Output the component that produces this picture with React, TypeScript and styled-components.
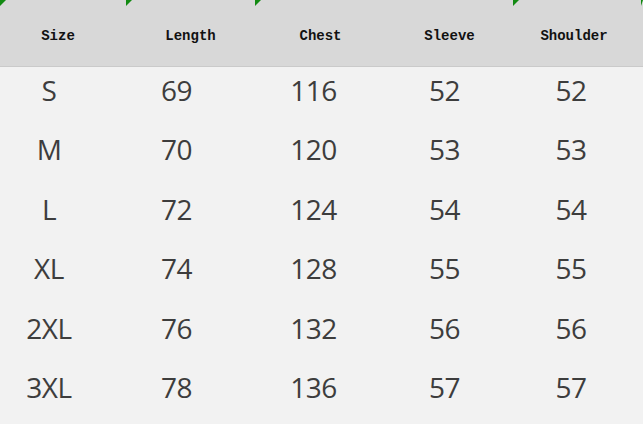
import React from 'react';
import styled, {createGlobalStyle} from 'styled-components';

const GlobalStyle = createGlobalStyle`
  html, body {
    margin: 0;
    padding: 0;
    background: #f2f2f2;
  }
`;

type Col = {
  title: string;
  width: number;
  headShift: number;
  bodyShift: number;
  mark: boolean;
};

const columns: Col[] = [
  {title: 'Size', width: 126, headShift: -5, bodyShift: -14, mark: true},
  {title: 'Length', width: 129, headShift: 0, bodyShift: -14, mark: true},
  {title: 'Chest', width: 129, headShift: 1, bodyShift: -6, mark: true},
  {title: 'Sleeve', width: 129, headShift: 1, bodyShift: -4, mark: false},
  {title: 'Shoulder', width: 130, headShift: -4, bodyShift: -7, mark: true},
];

const rows = [
  ['S', '69', '116', '52', '52'],
  ['M', '70', '120', '53', '53'],
  ['L', '72', '124', '54', '54'],
  ['XL', '74', '128', '55', '55'],
  ['2XL', '76', '132', '56', '56'],
  ['3XL', '78', '136', '57', '57'],
];

const Sheet = styled.div`
  width: 643px;
  height: 424px;
  display: grid;
  grid-template-columns: ${columns.map((c) => `${c.width}px`).join(' ')};
  grid-template-rows: 67px repeat(6, 1fr);
  background: #f2f2f2;
  overflow: hidden;
`;

const HeadCell = styled.div<{$shift: number}>`
  position: relative;
  display: flex;
  align-items: center;
  justify-content: center;
  background: #d8d8d8;
  border-bottom: 1px solid #cacaca;
  font-family: 'Liberation Mono', 'DejaVu Sans Mono', monospace;
  font-weight: bold;
  font-size: 14px;
  color: #111;
  padding-top: 5px;
  box-sizing: border-box;
  & > span {
    transform: translateX(${(p) => p.$shift}px);
  }
`;

const Mark = styled.i`
  position: absolute;
  top: 0;
  left: 0;
  width: 6px;
  height: 6px;
  background: #128a12;
  clip-path: polygon(0 0, 100% 0, 0 100%);
`;

const EdgeMark = styled(Mark)`
  left: auto;
  right: 0;
  width: 2px;
`;

const Cell = styled.div<{$shift: number}>`
  display: flex;
  align-items: center;
  justify-content: center;
  padding-bottom: 14px;
  box-sizing: border-box;
  font-family: 'Open Sans', 'Noto Sans', sans-serif;
  font-size: 28px;
  font-weight: 500;
  color: #3d3d3d;
  letter-spacing: -0.5px;
  & > span {
    transform: translateX(${(p) => p.$shift}px);
  }
`;

export default function App() {
  return (
    <>
      <GlobalStyle />
      <Sheet>
        {columns.map((c, i) => (
          <HeadCell key={c.title} $shift={c.headShift}>
            {c.mark && <Mark />}
            {i === columns.length - 1 && <EdgeMark />}
            <span>{c.title}</span>
          </HeadCell>
        ))}
        {rows.map((r, ri) =>
          r.map((v, ci) => (
            <Cell key={`${ri}-${ci}`} $shift={columns[ci].bodyShift}>
              <span>{v}</span>
            </Cell>
          ))
        )}
      </Sheet>
    </>
  );
}
